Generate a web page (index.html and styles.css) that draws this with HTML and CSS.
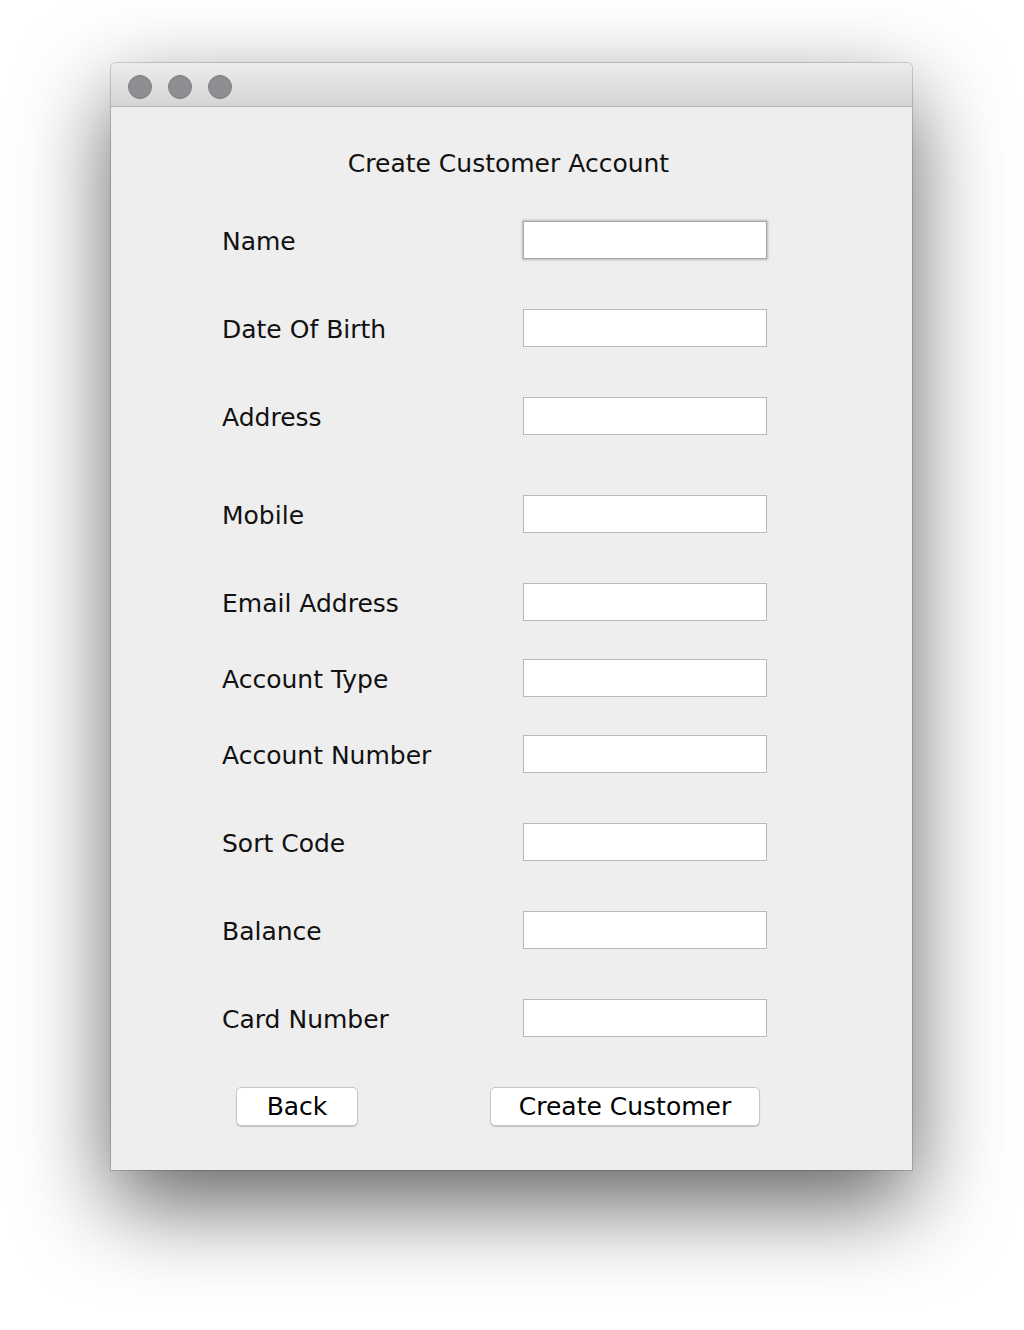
FILE: index.html
```html
<!DOCTYPE html>
<html lang="en">
<head>
<meta charset="utf-8">
<title>Create Customer Account</title>
<link rel="stylesheet" href="styles.css">
</head>
<body>
<div class="window">
  <div class="titlebar">
    <span class="light"></span>
    <span class="light"></span>
    <span class="light"></span>
  </div>
  <div class="content">
    <div class="title">Create Customer Account</div>
    <div class="form">
      <div class="row gap-50"><label class="label">Name</label><input class="field focused" type="text"></div>
      <div class="row gap-50"><label class="label">Date Of Birth</label><input class="field" type="text"></div>
      <div class="row gap-60"><label class="label">Address</label><input class="field" type="text"></div>
      <div class="row gap-50"><label class="label">Mobile</label><input class="field" type="text"></div>
      <div class="row gap-38"><label class="label">Email Address</label><input class="field" type="text"></div>
      <div class="row gap-38"><label class="label">Account Type</label><input class="field" type="text"></div>
      <div class="row gap-50"><label class="label">Account Number</label><input class="field" type="text"></div>
      <div class="row gap-50"><label class="label">Sort Code</label><input class="field" type="text"></div>
      <div class="row gap-50"><label class="label">Balance</label><input class="field" type="text"></div>
      <div class="row gap-50"><label class="label">Card Number</label><input class="field" type="text"></div>
    </div>
    <div class="buttons">
      <button class="btn btn-back" type="button">Back</button>
      <button class="btn btn-create" type="button">Create Customer</button>
    </div>
  </div>
</div>
</body>
</html>
```

FILE: styles.css
```css
html, body {
  margin: 0;
  padding: 0;
  background: #ffffff;
}

body {
  font-family: "DejaVu Sans", "Liberation Sans", sans-serif;
  color: #111;
  padding-top: 63px;
  padding-left: 111px;
  height: 1330px;
  box-sizing: border-box;
  overflow: hidden;
}

.window {
  width: 801px;
  height: 1107px;
  background: #eeeeee;
  border-radius: 5px 5px 0 0;
  box-shadow: 0 0 0 1px rgba(0, 0, 0, 0.16), 0 34px 90px rgba(0, 0, 0, 0.62);
  display: flex;
  flex-direction: column;
}

.titlebar {
  height: 44px;
  border-bottom: 1px solid #b3b3b3;
  border-radius: 5px 5px 0 0;
  background: linear-gradient(#ececec, #d5d5d5);
  display: flex;
  align-items: flex-start;
  gap: 16px;
  padding: 12px 0 0 17px;
  box-sizing: border-box;
}

.light {
  width: 24px;
  height: 24px;
  border-radius: 50%;
  background: #8e8d92;
  box-sizing: border-box;
  border: 1px solid #7c7b80;
}

.content {
  padding-top: 42px;
}

.title {
  font-size: 25px;
  line-height: 30px;
  text-align: center;
  padding-right: 6px;
}

.form {
  margin-top: 42px;
  padding-left: 111px;
  display: flex;
  flex-direction: column;
}

.row {
  display: grid;
  grid-template-columns: 301px 244px;
  align-items: center;
  height: 38px;
}

.gap-50 { margin-bottom: 50px; }
.gap-60 { margin-bottom: 60px; }
.gap-38 { margin-bottom: 38px; }

.label {
  font-size: 25px;
  line-height: 30px;
  padding-top: 4px;
}

.field {
  width: 244px;
  height: 38px;
  box-sizing: border-box;
  margin: 0;
  padding: 0 6px;
  background: #ffffff;
  border: 1px solid #b9b9b9;
  border-radius: 0;
  outline: none;
  font-family: inherit;
  font-size: 22px;
}

.field.focused {
  border-color: #a8a8a8;
  box-shadow: 0 0 2px 1px rgba(0, 0, 0, 0.22);
}

.buttons {
  display: flex;
  gap: 132px;
  padding-left: 125px;
}

.btn {
  height: 39px;
  box-sizing: border-box;
  margin: 0;
  padding: 1px 0 0;
  background: #ffffff;
  border: 1px solid #c6c6c6;
  border-radius: 5px;
  box-shadow: 0 1px 1px rgba(0, 0, 0, 0.18);
  font-family: inherit;
  font-size: 25px;
  line-height: 30px;
  color: #000;
}

.btn-back { width: 122px; }
.btn-create { width: 270px; }
```
